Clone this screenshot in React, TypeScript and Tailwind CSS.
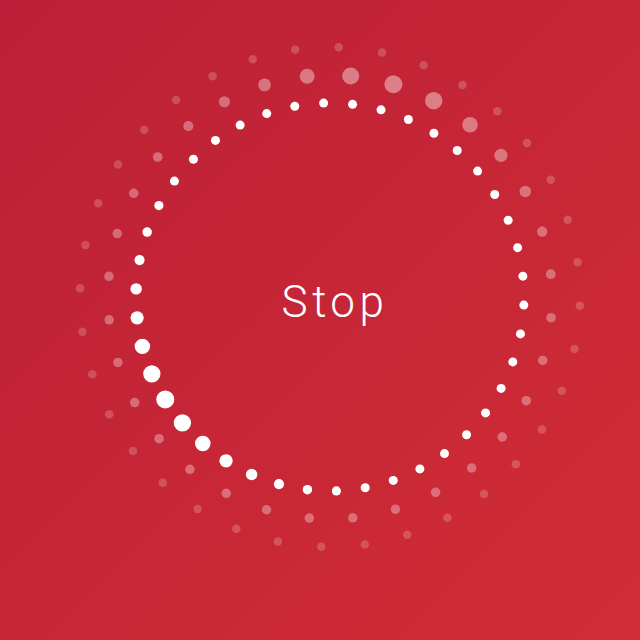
import React from "react";

type Ring = {
  r: number;
  count: number;
  phase: number;
  peak: number;
  spread: number;
  base: number;
  boost: number;
  opacity: number;
  peakOpacity: number;
};

const CX = 330;
const CY = 297;

const RINGS: Ring[] = [
  { r: 250, count: 36, phase: 2, peak: 0, spread: 1, base: 8.5, boost: 0, opacity: 0.2, peakOpacity: 0.2 },
  { r: 222, count: 32, phase: -5.9, peak: -72, spread: 36, base: 9.5, boost: 8.5, opacity: 0.33, peakOpacity: 0.42 },
  { r: 194, count: 42, phase: 2.4, peak: 148, spread: 30, base: 9, boost: 9, opacity: 1, peakOpacity: 1 },
];

function angDiff(a: number, b: number) {
  let d = ((a - b) % 360 + 360) % 360;
  if (d > 180) d -= 360;
  return d;
}

function Dots() {
  return (
    <svg className="absolute inset-0" width={640} height={640} viewBox="0 0 640 640">
      {RINGS.map((ring, ri) =>
        Array.from({ length: ring.count }).map((_, i) => {
          const a = ring.phase + (360 / ring.count) * i;
          const rad = (a * Math.PI) / 180;
          const k = ring.boost ? Math.exp(-Math.pow(angDiff(a, ring.peak) / ring.spread, 2)) : 0;
          const d = ring.base + ring.boost * k;
          const op = ring.opacity + (ring.peakOpacity - ring.opacity) * k;
          return (
            <circle
              key={`${ri}-${i}`}
              cx={CX + ring.r * Math.cos(rad)}
              cy={CY + ring.r * Math.sin(rad)}
              r={d / 2}
              fill="#ffffff"
              fillOpacity={op}
            />
          );
        })
      )}
    </svg>
  );
}

export default function App() {
  return (
    <div className="relative h-[640px] w-[640px] overflow-hidden bg-gradient-to-br from-[#bc1f37] to-[#d02d35]">
      <Dots />
      <div className="relative flex h-full w-full items-center justify-center pb-[36px] pl-[30px]">
        <span className="font-['Roboto',sans-serif] text-[44px] font-light leading-none tracking-[4.5px] text-white">Stop</span>
      </div>
    </div>
  );
}
